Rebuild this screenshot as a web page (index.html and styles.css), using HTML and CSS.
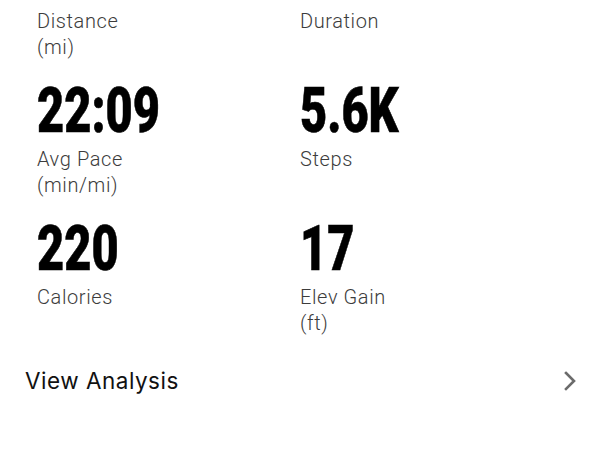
FILE: index.html
```html
<!DOCTYPE html>
<html>
<head>
<meta charset="utf-8">
<link rel="stylesheet" href="styles.css">
</head>
<body>
<main class="summary">
  <section class="stats">
    <div class="stat first">
      <div class="label">Distance<br>(mi)</div>
    </div>
    <div class="stat first">
      <div class="label">Duration</div>
    </div>
    <div class="stat">
      <div class="value"><span>22:09</span></div>
      <div class="label">Avg Pace<br>(min/mi)</div>
    </div>
    <div class="stat">
      <div class="value"><span>5.6K</span></div>
      <div class="label">Steps</div>
    </div>
    <div class="stat">
      <div class="value"><span>220</span></div>
      <div class="label">Calories</div>
    </div>
    <div class="stat">
      <div class="value"><span>17</span></div>
      <div class="label">Elev Gain<br>(ft)</div>
    </div>
  </section>
  <a class="analysis" href="#">
    <span class="analysis-text">View Analysis</span>
    <svg class="chevron" width="12" height="20" viewBox="0 0 12 20" aria-hidden="true">
      <path d="M2 2 L10 10 L2 18" fill="none" stroke="#6b6b6b" stroke-width="2.6" stroke-linecap="square"/>
    </svg>
  </a>
</main>
</body>
</html>
```

FILE: styles.css
```css
html, body {
  margin: 0;
  padding: 0;
  background: #ffffff;
}

.summary {
  width: 600px;
  height: 450px;
  overflow: hidden;
}

.stats {
  display: grid;
  grid-template-columns: 263px 1fr;
  padding: 8px 0 0 37px;
  row-gap: 20px;
}

.stat {
  display: flex;
  flex-direction: column;
  min-height: 52px;
}

.value {
  font-family: Roboto, "Liberation Sans", sans-serif;
  font-weight: 900;
  font-size: 63px;
  line-height: 62px;
  height: 62px;
  color: #000;
  margin-bottom: 4px;
  white-space: nowrap;
}

.value span {
  display: inline-block;
  transform: scaleX(0.745);
  transform-origin: left center;
  -webkit-text-stroke: 0.6px #000;
}

.label {
  font-family: Roboto, "Liberation Sans", sans-serif;
  font-weight: 300;
  font-size: 20px;
  line-height: 26px;
  letter-spacing: 0.6px;
  color: #3c3c3c;
}

.analysis {
  display: flex;
  align-items: center;
  justify-content: space-between;
  margin-top: 32px;
  padding: 0 24px 0 25px;
  text-decoration: none;
  color: #111111;
}

.analysis-text {
  font-family: Inter, "Liberation Sans", sans-serif;
  font-size: 22.5px;
  line-height: 26px;
  letter-spacing: 0.5px;
}

.chevron {
  display: block;
}
```
